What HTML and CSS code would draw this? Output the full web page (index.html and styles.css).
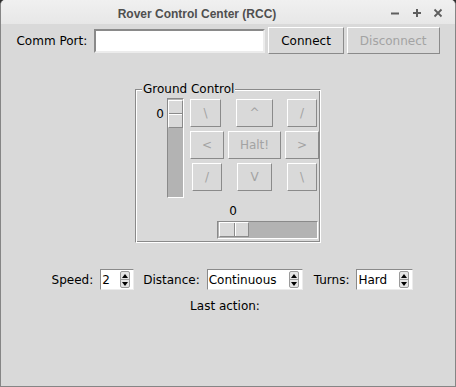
FILE: index.html
```html
<!DOCTYPE html>
<html lang="en">

<head>
  <meta charset="UTF-8" />
  <meta name="viewport" content="width=device-width, initial-scale=1.0"/>
  <title>Rover Control Center (RCC)</title>
  <link rel="stylesheet" href="styles.css">
</head>

<body>
  <div class="window">
    <div class="titlebar">
      <span class="title">Rover Control Center (RCC)</span>
      <div class="controls">
        <svg class="ctl" viewBox="0 0 10 10"><path d="M1 5.5H9" /></svg>
        <svg class="ctl ctl-plus" viewBox="0 0 10 10"><path d="M1 5H9M5 1V9" /></svg>
        <svg class="ctl ctl-close" viewBox="0 0 10 10"><path d="M1.5 1.5L8.5 8.5M8.5 1.5L1.5 8.5" /></svg>
      </div>
    </div>

    <div class="content">
      <div class="port-row">
        <span class="port-label">Comm Port:</span>
        <div class="entry"></div>
        <button class="btn">Connect</button>
        <button class="btn" disabled>Disconnect</button>
      </div>

      <div class="ground">
        <span class="ground-title">Ground Control</span>

        <div class="vscale">
          <span class="vvalue">0</span>
          <div class="vtrough"><div class="vslider"></div></div>
        </div>

        <button class="btn pad" disabled>\</button>
        <button class="btn pad" disabled>^</button>
        <button class="btn pad" disabled>/</button>
        <button class="btn pad wide" disabled>&lt;</button>
        <button class="btn pad wide" disabled>Halt!</button>
        <button class="btn pad wide" disabled>&gt;</button>
        <button class="btn pad" disabled>/</button>
        <button class="btn pad" disabled>V</button>
        <button class="btn pad" disabled>\</button>

        <div class="hscale">
          <span class="hvalue">0</span>
          <div class="htrough"><div class="hslider"></div></div>
        </div>
      </div>

      <div class="settings">
        <span class="set-label">Speed:</span>
        <div class="spin spin-speed">
          <span class="spin-text">2</span>
          <div class="arrows">
            <span class="arrow arrow-up"></span>
            <span class="arrow arrow-down"></span>
          </div>
        </div>
        <span class="set-label">Distance:</span>
        <div class="spin spin-distance">
          <span class="spin-text">Continuous</span>
          <div class="arrows">
            <span class="arrow arrow-up"></span>
            <span class="arrow arrow-down"></span>
          </div>
        </div>
        <span class="set-label">Turns:</span>
        <div class="spin spin-turns">
          <span class="spin-text">Hard</span>
          <div class="arrows">
            <span class="arrow arrow-up"></span>
            <span class="arrow arrow-down"></span>
          </div>
        </div>
      </div>

      <div class="last-action">Last action:</div>
    </div>
  </div>
</body>

</html>
```

FILE: styles.css
```css
* {
  margin: 0;
  padding: 0;
  box-sizing: border-box;
}

:root {
  --bg: #d9d9d9;
  --dark: #8a8a8a;
  --light: #ffffff;
  --trough: #b3b3b3;
  --disabled: #a3a3a3;
}

html,
body {
  background-color: #2e2e2e;
}

body {
  font-family: 'DejaVu Sans', 'Noto Sans', sans-serif;
  font-size: 12px;
  line-height: 14px;
  color: #000;
}

.window {
  width: 456px;
  height: 387px;
  background-color: var(--bg);
  border: 1px solid #858585;
  border-top: none;
  border-radius: 5px 5px 0 0;
  overflow: hidden;
  display: flex;
  flex-direction: column;
}

/* title bar */
.titlebar {
  height: 24px;
  display: flex;
  align-items: center;
  padding-top: 4px;
  background: linear-gradient(#f0f0f0, #e7e7e7);
}

.title {
  flex: 1;
  text-align: center;
  padding-left: 8px;
  font-family: 'Liberation Sans', Arial, sans-serif;
  font-weight: bold;
  color: #4f4f4f;
}

.controls {
  width: 70px;
  display: flex;
  align-items: center;
  padding-left: 5px;
  margin-top: -3px;
}

.ctl {
  width: 10px;
  height: 10px;
  fill: none;
  stroke: #5e5e5e;
  stroke-width: 2;
}

.ctl-plus {
  margin-left: 12px;
}

.ctl-close {
  margin-left: 11px;
  stroke-width: 1.8;
}

/* main area */
.content {
  flex: 1;
  display: flex;
  flex-direction: column;
  align-items: center;
}

.port-row {
  margin-top: 3px;
  display: flex;
  align-items: center;
  height: 27px;
}

.port-label {
  margin-right: 7px;
}

.entry {
  width: 171px;
  height: 24px;
  margin-right: 3px;
  background-color: #fff;
  border: 2px solid;
  border-color: var(--dark) #ececec #ececec var(--dark);
}

.btn {
  font: inherit;
  height: 27px;
  padding: 0 12px;
  background-color: var(--bg);
  color: #000;
  border: 1px solid;
  border-color: var(--light) var(--dark) var(--dark) var(--light);
}

.btn + .btn {
  margin-left: 3px;
}

.btn:disabled {
  color: var(--disabled);
}

/* ground control frame */
.ground {
  position: relative;
  margin-top: 35px;
  width: 186px;
  height: 154px;
  border: 1px solid;
  border-color: var(--dark) var(--light) var(--light) var(--dark);
  box-shadow: inset 1px 1px 0 var(--light), inset -1px -1px 0 var(--dark);
  display: grid;
  grid-template-columns: 30px 37px 56px 37px;
  grid-template-rows: 28px 28px 28px auto;
  column-gap: 1px;
  row-gap: 4px;
  padding: 9px 1px 3px 20px;
}

.ground-title {
  position: absolute;
  left: 6px;
  top: -8px;
  padding: 0 1px;
  background-color: var(--bg);
}

.vscale {
  grid-row: 1 / 5;
  grid-column: 1;
  align-self: start;
  margin-top: -1px;
  display: flex;
  align-items: flex-start;
}

.vvalue {
  width: 8px;
  margin-top: 9px;
  margin-right: 3px;
  text-align: center;
}

.vtrough {
  width: 17px;
  height: 100px;
  padding-top: 1px;
  background-color: var(--trough);
  border: 1px solid;
  border-color: var(--dark) var(--light) var(--light) var(--dark);
}

.vslider {
  width: 15px;
  height: 28px;
  border: 1px solid;
  border-color: var(--light) var(--dark) var(--dark) var(--light);
  background: linear-gradient(to bottom, var(--bg) 12px, var(--dark) 12px, var(--dark) 13px, var(--light) 13px, var(--light) 14px, var(--bg) 14px);
}

.pad {
  height: 28px;
  justify-self: center;
}

.pad.wide {
  justify-self: stretch;
  padding: 0;
}

.hscale {
  grid-column: 2 / 5;
  justify-self: end;
  margin-top: 9px;
  margin-right: 1px;
  display: flex;
  flex-direction: column;
  align-items: flex-start;
}

.hvalue {
  width: 8px;
  margin-left: 12px;
  margin-bottom: 3px;
  text-align: center;
}

.htrough {
  width: 101px;
  height: 18px;
  padding-left: 1px;
  background-color: var(--trough);
  border: 1px solid;
  border-color: var(--dark) var(--light) var(--light) var(--dark);
}

.hslider {
  width: 30px;
  height: 15px;
  border: 1px solid;
  border-color: var(--light) var(--dark) var(--dark) var(--light);
  background: linear-gradient(to right, var(--bg) 14px, var(--dark) 14px, var(--dark) 15px, var(--light) 15px, var(--light) 16px, var(--bg) 16px);
}

/* speed / distance / turns */
.settings {
  margin-top: 26px;
  padding-left: 9px;
  display: flex;
  align-items: center;
  height: 21px;
}

.set-label {
  margin-right: 7px;
}

.spin {
  height: 21px;
  display: flex;
  align-items: center;
  background-color: #fff;
  border: 1px solid;
  border-color: var(--dark) #ececec #ececec var(--dark);
  padding-left: 1px;
}

.spin-text {
  flex: 1;
}

.spin-speed {
  width: 34px;
  margin-right: 9px;
}

.spin-distance {
  width: 96px;
  margin-right: 11px;
}

.spin-turns {
  width: 57px;
}

.arrows {
  width: 10px;
  height: 17px;
  margin-right: 3px;
  display: flex;
  flex-direction: column;
  border: 1px solid #9a9a9a;
  border-radius: 2px;
  background-color: #e4e4e4;
}

.arrow {
  flex: 1;
  display: flex;
  align-items: center;
  justify-content: center;
}

.arrow-up {
  border-bottom: 1px solid #9a9a9a;
}

.arrow-up::before,
.arrow-down::before {
  content: "";
  width: 0;
  height: 0;
  border-left: 3.5px solid transparent;
  border-right: 3.5px solid transparent;
}

.arrow-up::before {
  border-bottom: 4px solid #000;
}

.arrow-down::before {
  border-top: 4px solid #000;
}

.last-action {
  margin-top: 9px;
  padding-right: 6px;
}
```
